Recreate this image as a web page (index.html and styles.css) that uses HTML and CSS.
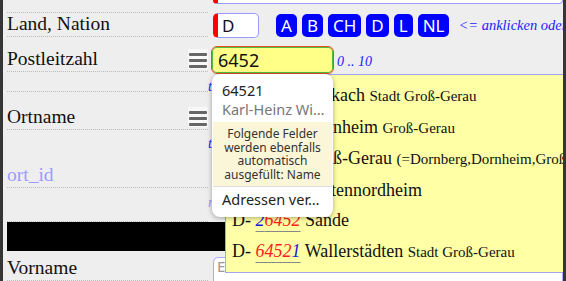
FILE: index.html
```html
<!DOCTYPE html>
<html>
<head>
    <title>Adresse bearbeiten</title>
    <link rel="stylesheet" href="styles.css">
</head>
<body>
<div class="page">
    <div class="row r-cut">
        <div class="label"></div>
        <div class="value"><div class="prev-field"></div></div>
    </div>

    <div class="row r-land">
        <div class="label">Land, Nation</div>
        <div class="value">
            <div class="land-input">D</div>
            <div class="lands">
                <button>A</button><button>B</button><button>CH</button><button>D</button><button>L</button><button>NL</button>
            </div>
            <div class="hint">&lt;= anklicken oder eingeben</div>
        </div>
    </div>

    <div class="row r-plz">
        <div class="label">Postleitzahl <svg class="menu-icon" width="20" height="20" viewBox="0 0 20 20"><rect x="1" y="4" width="18" height="3" rx="1"/><rect x="1" y="10" width="18" height="3" rx="1"/><rect x="1" y="16" width="18" height="3" rx="1"/></svg></div>
        <div class="value">
            <div class="plz-input">6452</div>
            <div class="hint range">0 .. 10</div>

            <div class="plz-list">
                <div>D- <span class="plz"><span class="hit">6452</span><span class="miss">1</span></span> Berkach <span class="sub">Stadt Groß-Gerau</span></div>
                <div>D- <span class="plz"><span class="hit">6452</span><span class="miss">1</span></span> Dornheim <span class="sub">Groß-Gerau</span></div>
                <div>D- <span class="plz"><span class="hit">6452</span><span class="miss">1</span></span> Groß-Gerau <span class="sub">(=Dornberg,Dornheim,Groß-Gerau,Wallerstädten)</span></div>
                <div>D- <span class="plz"><span class="miss">3</span><span class="hit">6452</span></span> Kaltennordheim</div>
                <div>D- <span class="plz"><span class="miss">2</span><span class="hit">6452</span></span> Sande</div>
                <div>D- <span class="plz"><span class="hit">6452</span><span class="miss">1</span></span> Wallerstädten <span class="sub">Stadt Groß-Gerau</span></div>
            </div>

            <div class="autofill">
                <div class="af-item">
                    <div class="af-main">64521</div>
                    <div class="af-sub">Karl-Heinz Wi…</div>
                </div>
                <div class="af-note">Folgende Felder werden ebenfalls automatisch ausgefüllt: Name</div>
                <div class="af-manage">Adressen ver…</div>
            </div>
        </div>
    </div>

    <div class="row r-plzhint">
        <div class="label"></div>
        <div class="value"><div class="hint">treffer: 6 Orte</div></div>
    </div>

    <div class="row r-ort">
        <div class="label">Ortname <svg class="menu-icon" width="20" height="20" viewBox="0 0 20 20"><rect x="1" y="4" width="18" height="3" rx="1"/><rect x="1" y="10" width="18" height="3" rx="1"/><rect x="1" y="16" width="18" height="3" rx="1"/></svg></div>
        <div class="value"><div class="text-input"></div></div>
    </div>

    <div class="row r-ortid">
        <div class="label pale">ort_id</div>
        <div class="value"><div class="hint">treffer aus Ortsliste</div></div>
    </div>

    <div class="row r-blank">
        <div class="label"></div>
        <div class="value"><div class="hint pale">readonly</div></div>
    </div>

    <div class="row r-black">
        <div class="black-bar"></div>
    </div>

    <div class="row r-vorname">
        <div class="label">Vorname</div>
        <div class="value"><div class="text-input placeholder">Erika</div></div>
    </div>
</div>
</body>
</html>
```

FILE: styles.css
```css
* {
  box-sizing: border-box;
}

html, body {
  margin: 0;
}

body {
  background-color: #eee;
  font-family: "Liberation Serif", serif;
  color: #111;
  overflow: hidden;
}

.page {
  height: 281px;
  border-left: 3px solid #353535;
  border-right: 3px solid #353535;
  overflow: hidden;
}

.row {
  display: flex;
}

.label {
  flex: none;
  width: 201px;
  margin-left: 4px;
  display: flex;
  align-items: flex-end;
  justify-content: space-between;
  border-bottom: 1px dotted #bbb;
  font-size: 19.5px;
  line-height: 24px;
  white-space: nowrap;
}

.label.pale {
  color: #9c9cff;
}

.value {
  flex: 1;
  display: flex;
  align-items: flex-start;
  position: relative;
  min-width: 0;
}

.value > * {
  flex: none;
}

.r-cut { height: 13px; }
.r-land { height: 24px; }
.r-plz { height: 35px; }
.r-plzhint { height: 20px; }
.r-ort { height: 38px; }
.r-ortid { height: 58px; }
.r-blank { height: 34px; }
.r-black { height: 29px; }
.r-vorname { height: 30px; }

.menu-icon {
  margin-bottom: 2px;
  background-color: #f8f8f8;
  fill: #666;
}

.prev-field {
  flex: 1 !important;
  margin-left: 5px;
  height: 4px;
  border: 1px solid #9999ff;
  border-top: none;
  border-left: 5px solid #f00;
  border-radius: 0 0 5px 5px;
  background-color: #fff;
}

.land-input {
  margin-left: 5px;
  width: 46px;
  height: 25px;
  border: 1px solid #9999ff;
  border-left: 5px solid #f00;
  border-radius: 5px;
  background-color: #fff;
  font-family: "Noto Sans", sans-serif;
  font-size: 17px;
  line-height: 23px;
  padding-left: 4px;
}

.lands {
  display: flex;
  gap: 5px;
  margin-left: 17px;
  margin-top: 1px;
}

.lands button {
  height: 23px;
  padding: 0 5px;
  border: none;
  border-radius: 5px;
  background-color: #00f;
  color: #fff;
  font-family: "Noto Sans", sans-serif;
  font-size: 17px;
  line-height: 23px;
}

.hint {
  font-style: italic;
  font-size: 14.5px;
  line-height: 18px;
  color: #2222ff;
  white-space: nowrap;
}

.r-land .hint {
  margin-left: 9px;
  margin-top: 3px;
}

.r-plz .value {
  padding-top: 9px;
}

.plz-input {
  margin-left: 3px;
  width: 123px;
  height: 28px;
  border: 1px solid #e2502c;
  box-shadow: inset 0 0 0 1px #52c03e;
  border-radius: 6px;
  background-color: #ffff88;
  font-family: "Noto Sans", sans-serif;
  font-size: 18px;
  line-height: 26px;
  padding-left: 6px;
}

.hint.range {
  margin-left: 3px;
  margin-top: 7px;
  font-size: 14px;
}

.r-plzhint .value { padding-top: 5px; }
.r-ortid .value { padding-top: 4px; }
.r-blank .value { padding-top: 5px; }

.hint.pale {
  color: #9c9cff;
}

.text-input {
  flex: 1 !important;
  margin-left: 5px;
  margin-top: 6px;
  height: 30px;
  border: 1px solid #aaaaff;
  border-radius: 5px;
  background-color: #fff;
  font-family: "Noto Sans", sans-serif;
  font-size: 15px;
  line-height: 17px;
  padding-left: 3px;
}

.text-input.placeholder {
  color: #999;
}

.black-bar {
  margin-left: 4px;
  width: 224px;
  height: 29px;
  background-color: #000;
}

/* PLZ suggestion list */
.plz-list {
  position: absolute;
  left: 17px;
  top: 37px;
  right: 0;
  height: 199px;
  padding: 5px 0 0 6px;
  background-color: #ffffa5;
  border: 1px solid #a4a4ee;
  border-right: none;
  font-size: 18px;
  line-height: 30.6px;
  white-space: nowrap;
  overflow: hidden;
  z-index: 1;
}

.plz {
  font-style: italic;
  text-decoration: underline;
  text-decoration-color: #888;
  text-underline-offset: 5px;
}

.hit {
  color: #ff2020;
}

.miss {
  color: #1a1ad8;
}

.sub {
  font-size: 15px;
}

/* browser autofill popup */
.autofill {
  position: absolute;
  left: 4px;
  top: 37px;
  width: 121px;
  background-color: #fff;
  border-radius: 8px;
  box-shadow: 0 1px 5px rgba(0, 0, 0, 0.35);
  font-family: "Noto Sans", sans-serif;
  overflow: hidden;
  z-index: 2;
}

.af-item {
  padding: 7px 6px 3px 10px;
  font-size: 14.5px;
  line-height: 19px;
  white-space: nowrap;
}

.af-main {
  color: #222;
}

.af-sub {
  color: #777;
}

.af-note {
  margin: 0 1px;
  padding: 5px 4px;
  background-color: #fcf6d8;
  border-bottom: 1px solid #ddd;
  text-align: center;
  font-size: 12px;
  line-height: 13.5px;
  color: #333;
}

.af-manage {
  padding: 3px 6px 8px 10px;
  font-size: 14.5px;
  line-height: 19px;
  color: #222;
  white-space: nowrap;
}
```
